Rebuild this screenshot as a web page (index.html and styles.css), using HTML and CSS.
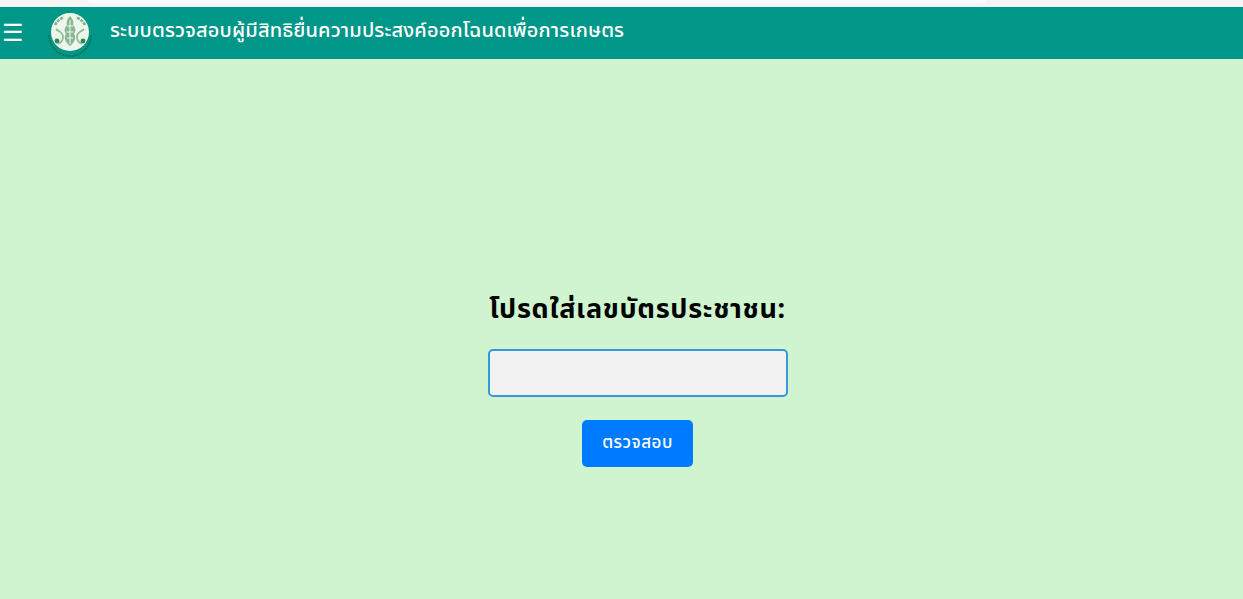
FILE: index.html
```html
<!DOCTYPE html>
<html lang="th">
<head>
<meta charset="utf-8">
<title>ระบบตรวจสอบผู้มีสิทธิยื่นความประสงค์ออกโฉนดเพื่อการเกษตร</title>
<link rel="stylesheet" href="styles.css">
</head>
<body>
<div class="browser-strip"><div class="browser-pill"></div></div>
<header class="topbar">
  <button class="menu-btn" type="button" aria-label="menu">☰</button>
  <svg class="logo" viewBox="0 0 48 48" width="48" height="48" aria-hidden="true">
    <circle cx="24" cy="22" r="19" fill="#eef5ea"/>
    <path d="M3 25 A21 21 0 0 0 45 25" fill="none" stroke="#1a6a38" stroke-width="1.5" stroke-dasharray="1.5 1"/>
    <path d="M24 6c-3 3-4 6-3 9-3 3-3 6-1 9-2 3-2 7 4 12 6-5 6-9 4-12 2-3 2-6-1-9 1-3 0-6-3-9z" fill="#86b892"/>
    <path d="M24 10v24M21 16h6M20.5 22h7M21 28h6" stroke="#f0f6ec" stroke-width="1" fill="none"/>
    <path d="M9 15c2-4 5-6 9-8M39 15c-2-4-5-6-9-8" stroke="#7db58b" stroke-width="2.6" stroke-dasharray="3 1" fill="none"/>
    <path d="M10 19c3 3 7 3 7 8s-3 6-5 7M38 19c-3 3-7 3-7 8s3 6 5 7" stroke="#8fbd9b" stroke-width="1.8" fill="none"/>
    <circle cx="11" cy="31" r="2.4" fill="#2c8a4a"/>
    <circle cx="37" cy="31" r="2.4" fill="#2c8a4a"/>
  </svg>
  <h1 class="title">ระบบตรวจสอบผู้มีสิทธิยื่นความประสงค์ออกโฉนดเพื่อการเกษตร</h1>
</header>
<main class="main">
  <form class="check-form" onsubmit="return false">
    <label class="field-label" for="cid">โปรดใส่เลขบัตรประชาชน:</label>
    <input class="field-input" id="cid" type="text">
    <button class="submit-btn" type="submit">ตรวจสอบ</button>
  </form>
</main>
</body>
</html>
```
FILE: styles.css
```css
* { box-sizing: border-box; }
html, body { height: 100%; }
body {
  margin: 0;
  display: flex;
  flex-direction: column;
  overflow: hidden;
  background: #cff4cf;
  font-family: Tahoma, "Noto Sans", "Noto Sans Thai", sans-serif;
}
.browser-strip {
  height: 7px;
  flex: none;
  padding: 0 258px 0 88px;
  background: #f5f5f5;
}
.browser-pill {
  height: 3px;
  background: #fff;
  border-radius: 0 0 10px 10px;
}
.topbar {
  height: 52px;
  flex: none;
  display: flex;
  align-items: center;
  background: #009688;
  color: #fff;
}
.menu-btn {
  width: 26px;
  padding: 0;
  border: 0;
  background: none;
  color: #fff;
  font-size: 24px;
  line-height: 1;
}
.logo { margin: 2px 0 0 20px; flex: none; }
.title {
  margin: -4px 0 0 16px;
  font-size: 20px;
  font-weight: 500;
  letter-spacing: 0.15px;
  white-space: nowrap;
}
.main {
  flex: 1;
  display: flex;
  align-items: center;
  justify-content: center;
  padding: 97px 0 0 32px;
}
.check-form {
  width: 300px;
  display: flex;
  flex-direction: column;
  align-items: center;
}
.field-label {
  font-size: 27px;
  font-weight: 700;
  letter-spacing: 0.7px;
  color: #000;
  white-space: nowrap;
}
.field-input {
  width: 300px;
  height: 48px;
  margin-top: 19px;
  border: 2px solid #3498db;
  border-radius: 5px;
  background: #f2f2f2;
}
.submit-btn {
  width: 111px;
  height: 47px;
  margin-top: 23px;
  border: 0;
  border-radius: 5px;
  background: #007bff;
  color: #fff;
  font-family: inherit;
  font-size: 17px;
  font-weight: 500;
  letter-spacing: 0.5px;
}
```
